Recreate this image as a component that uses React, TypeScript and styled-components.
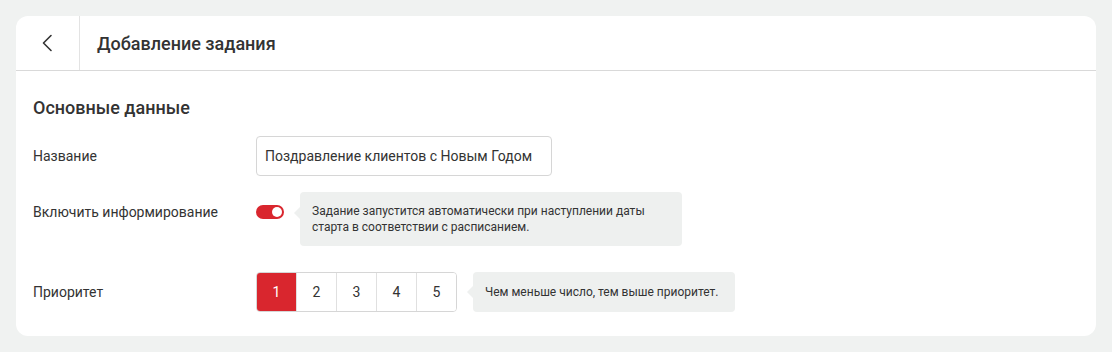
import { useState } from 'react'
import styled, { createGlobalStyle } from 'styled-components'

const GlobalStyle = createGlobalStyle`
  * { box-sizing: border-box; }
  body {
    margin: 0;
    background: #f0f2f1;
    font-family: Roboto, 'Noto Sans', 'Liberation Sans', sans-serif;
    color: #333;
  }
`

const Page = styled.div`
  padding: 16px;
`

const Card = styled.div`
  width: 1080px;
  background: #fff;
  border-radius: 12px;
`

const Header = styled.div`
  display: flex;
  align-items: stretch;
  height: 55px;
  border-bottom: 1px solid #d9d9d9;
`

const BackButton = styled.button`
  width: 64px;
  display: flex;
  align-items: center;
  justify-content: center;
  background: none;
  border: none;
  border-right: 1px solid #e3e3e3;
  padding: 0;
  cursor: pointer;
  color: #333;
`

const Title = styled.h1`
  margin: 0 0 0 17px;
  display: flex;
  align-items: center;
  font-size: 18px;
  font-weight: 500;
  color: #333;
`

const Body = styled.div`
  padding: 25px 17px 24px;
`

const SectionTitle = styled.h2`
  margin: 0 0 16px;
  font-size: 18px;
  line-height: 24px;
  font-weight: 500;
`

const Row = styled.div<{ $gap: number }>`
  display: grid;
  grid-template-columns: 223px 1fr;
  align-items: start;
  margin-bottom: ${(p) => p.$gap}px;
  &:last-child { margin-bottom: 0; }
`

const Label = styled.div`
  font-size: 14px;
  line-height: 40px;
`

const Field = styled.div`
  display: flex;
  align-items: flex-start;
  gap: 16px;
`

const Input = styled.input`
  width: 296px;
  height: 40px;
  border: 1px solid #d6d6d6;
  border-radius: 4px;
  padding: 0 8px;
  font: inherit;
  font-size: 14px;
  color: #333;
  outline: none;
`

const ToggleWrap = styled.div`
  height: 40px;
  display: flex;
  align-items: center;
`

const Toggle = styled.button<{ $on: boolean }>`
  position: relative;
  width: 28px;
  height: 14px;
  border-radius: 7px;
  border: none;
  padding: 0;
  background: ${(p) => (p.$on ? '#d9262e' : '#c4c4c4')};
  cursor: pointer;
  &::after {
    content: '';
    position: absolute;
    top: 2px;
    left: ${(p) => (p.$on ? '16px' : '2px')};
    width: 10px;
    height: 10px;
    border-radius: 50%;
    background: #fff;
  }
`

const Hint = styled.div<{ $width: number; $arrowTop: number }>`
  position: relative;
  width: ${(p) => p.$width}px;
  min-height: 40px;
  padding: 11px 12px;
  background: #eef0ef;
  border-radius: 4px;
  font-size: 12px;
  line-height: 16px;
  color: #333;
  display: flex;
  align-items: center;
  &::before {
    content: '';
    position: absolute;
    left: -6px;
    top: ${(p) => p.$arrowTop - 6}px;
    border-top: 6px solid transparent;
    border-bottom: 6px solid transparent;
    border-right: 6px solid #eef0ef;
  }
`

const Segments = styled.div`
  display: flex;
  border: 1px solid #d6d6d6;
  border-radius: 4px;
  overflow: hidden;
`

const Segment = styled.button<{ $active: boolean }>`
  width: 40px;
  height: 38px;
  border: none;
  border-left: 1px solid ${(p) => (p.$active ? '#d9262e' : '#e0e0e0')};
  background: ${(p) => (p.$active ? '#d9262e' : '#fff')};
  color: ${(p) => (p.$active ? '#fff' : '#333')};
  font: inherit;
  font-size: 14px;
  padding: 0;
  cursor: pointer;
  &:first-child { border-left: none; width: 39px; }
`

const ChevronLeft = () => (
  <svg width="24" height="24" viewBox="0 0 24 24" fill="none">
    <path d="M15 4.5L7.5 12L15 19.5" stroke="#333" strokeWidth="1.6" strokeLinecap="round" strokeLinejoin="round" />
  </svg>
)

const App = () => {
  const [name, setName] = useState('Поздравление клиентов с Новым Годом')
  const [notify, setNotify] = useState(true)
  const [priority, setPriority] = useState(1)

  return (
    <>
      <GlobalStyle />
      <Page>
        <Card>
          <Header>
            <BackButton aria-label="Назад">
              <ChevronLeft />
            </BackButton>
            <Title>Добавление задания</Title>
          </Header>
          <Body>
            <SectionTitle>Основные данные</SectionTitle>
            <Row $gap={16}>
              <Label>Название</Label>
              <Field>
                <Input value={name} onChange={(e) => setName(e.target.value)} />
              </Field>
            </Row>
            <Row $gap={26}>
              <Label>Включить информирование</Label>
              <Field>
                <ToggleWrap>
                  <Toggle $on={notify} onClick={() => setNotify(!notify)} />
                </ToggleWrap>
                <Hint $width={382} $arrowTop={21}>
                  Задание запустится автоматически при наступлении даты
                  <br />
                  старта в соответствии с расписанием.
                </Hint>
              </Field>
            </Row>
            <Row $gap={0}>
              <Label>Приоритет</Label>
              <Field>
                <Segments>
                  {[1, 2, 3, 4, 5].map((n) => (
                    <Segment key={n} $active={n === priority} onClick={() => setPriority(n)}>
                      {n}
                    </Segment>
                  ))}
                </Segments>
                <Hint $width={262} $arrowTop={20}>
                  Чем меньше число, тем выше приоритет.
                </Hint>
              </Field>
            </Row>
          </Body>
        </Card>
      </Page>
    </>
  )
}

export default App
